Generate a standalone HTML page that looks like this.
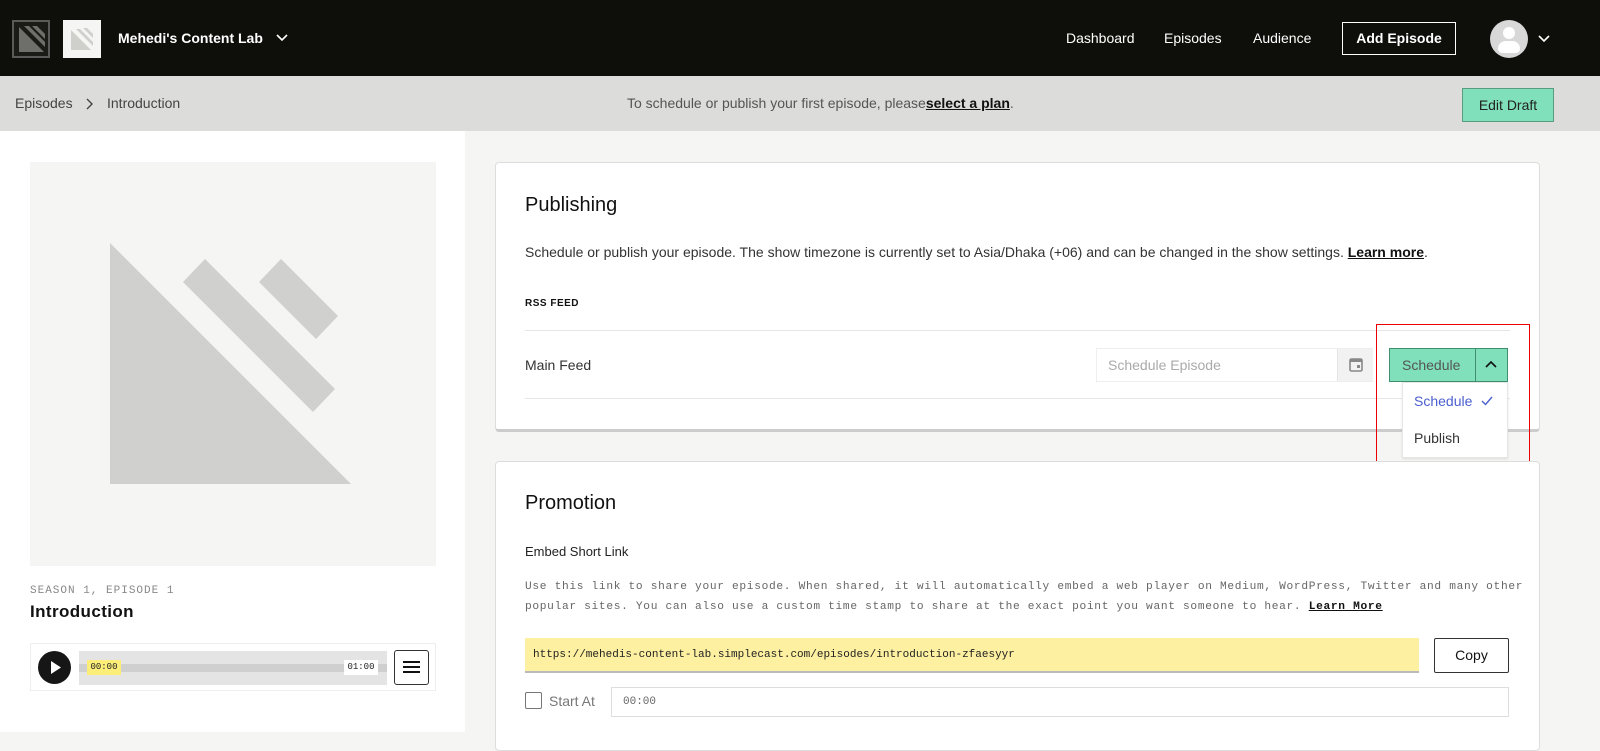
<!DOCTYPE html>
<html><head><meta charset="utf-8"><style>
*{box-sizing:border-box;margin:0;padding:0}
body{width:1600px;height:732px;overflow:hidden;font-family:"Liberation Sans",sans-serif;background:#f5f5f3;position:relative;color:#222}
.abs{position:absolute}
.mono{font-family:"Liberation Mono",monospace}
</style></head><body>
<div class="abs" style="left:0;top:0;width:1600px;height:76px;background:#0e0e0a"></div>
<div class="abs" style="left:12px;top:20px;width:38px;height:38px;border:2px solid #5a5a58;background:#1a1a17">
<svg width="34" height="34" viewBox="0 0 34 34"><polygon points="5,5 5,30 30,30" fill="#6e6e6a"/><polygon points="10,4 15,4 31,20 31,25" fill="#6e6e6a"/><polygon points="18,4 23,4 31,12 31,17" fill="#6e6e6a"/></svg></div>
<div class="abs" style="left:63px;top:20px;width:38px;height:38px;background:#f5f5f3">
<svg width="38" height="38" viewBox="0 0 38 38"><polygon points="8,10 8,30 28,30" fill="#cfcfcc"/><polygon points="13,9 17,9 30,22 30,26" fill="#cfcfcc"/><polygon points="20,8 24,8 30,14 30,18" fill="#cfcfcc"/></svg></div>
<div class="abs" style="left:118px;top:30px;color:#fff;font-size:14px;font-weight:bold">Mehedi's Content Lab</div>
<svg class="abs" style="left:276px;top:33px" width="12" height="10"><path d="M1 2 L6 7 L11 2" stroke="#fff" stroke-width="1.6" fill="none"/></svg>
<div class="abs" style="left:1066px;top:30px;color:#fff;font-size:14px">Dashboard</div>
<div class="abs" style="left:1164px;top:30px;color:#fff;font-size:14px">Episodes</div>
<div class="abs" style="left:1253px;top:30px;color:#fff;font-size:14px">Audience</div>
<div class="abs" style="left:1342px;top:22px;width:114px;height:33px;border:1px solid #fff;color:#fff;font-size:14px;font-weight:bold;text-align:center;line-height:31px">Add Episode</div>
<div class="abs" style="left:1490px;top:20px;width:38px;height:38px;border-radius:50%;background:#d8d8d8;overflow:hidden"><div class="abs" style="left:13px;top:7px;width:12px;height:12px;border-radius:50%;background:#fff"></div><div class="abs" style="left:8px;top:21px;width:22px;height:12px;border-radius:11px 11px 6px 6px;background:#fff"></div></div>
<svg class="abs" style="left:1538px;top:34px" width="12" height="10"><path d="M1 2 L6 7 L11 2" stroke="#fff" stroke-width="1.6" fill="none"/></svg>

<div class="abs" style="left:0;top:76px;width:1600px;height:55px;background:#dcdcdb"></div>
<div class="abs" style="left:15px;top:95px;font-size:14px;color:#444">Episodes</div>
<svg class="abs" style="left:85px;top:98px" width="10" height="12"><path d="M2 1 L7 6 L2 11" stroke="#444" stroke-width="1.4" fill="none"/></svg>
<div class="abs" style="left:107px;top:95px;font-size:14px;color:#444">Introduction</div>
<div class="abs" style="left:627px;top:95px;font-size:14px;color:#555">To schedule or publish your first episode, please<b style="color:#111;text-decoration:underline">select a plan</b>.</div>
<div class="abs" style="left:1462px;top:88px;width:92px;height:34px;background:#7fe0bb;border:1px solid #5a9c82;font-size:14px;color:#222;text-align:center;line-height:32px">Edit Draft</div>

<div class="abs" style="left:0;top:131px;width:465px;height:601px;background:#fff"></div>
<div class="abs" style="left:30px;top:162px;width:406px;height:404px;background:#f5f5f4">
<svg width="406" height="404"><polygon points="80,81 80,322 321,322" fill="#d0d0ce"/><polygon points="153,120 175,97 305,227 283,250" fill="#d0d0ce"/><polygon points="229,120 251,97 308,154 286,177" fill="#d0d0ce"/></svg></div>
<div class="abs mono" style="left:30px;top:585px;font-size:11px;color:#888;letter-spacing:1px">SEASON 1, EPISODE 1</div>
<div class="abs" style="left:30px;top:602px;font-size:17px;font-weight:bold;color:#111;letter-spacing:.4px">Introduction</div>
<div class="abs" style="left:30px;top:643px;width:406px;height:48px;border:1px solid #eee;background:#fff"></div>
<div class="abs" style="left:38px;top:651px;width:33px;height:33px;border-radius:50%;background:#161616"><svg width="33" height="33"><polygon points="13,10 13,23 23,16.5" fill="#fff"/></svg></div>
<div class="abs" style="left:79px;top:651px;width:308px;height:34px;background:#e4e4e4"><div class="abs" style="left:0;top:13px;width:308px;height:8px;background:#cfcfcf"></div></div>
<div class="abs mono" style="left:87px;top:660px;width:34px;height:15px;background:#fdee7a;font-size:9px;text-align:center;line-height:15px">00:00</div>
<div class="abs mono" style="left:344px;top:660px;width:34px;height:15px;background:#fff;font-size:9px;text-align:center;line-height:15px">01:00</div>
<div class="abs" style="left:394px;top:650px;width:35px;height:35px;border:1px solid #333;border-radius:3px"><div class="abs" style="left:8px;top:10px;width:17px;height:2px;background:#111;box-shadow:0 5px #111,0 10px #111"></div></div>

<div class="abs" style="left:495px;top:162px;width:1045px;height:270px;background:#fff;border:1px solid #ddd;border-bottom:3px solid #ccc;border-radius:4px"></div>
<div class="abs" style="left:525px;top:194px;font-size:20px;color:#111">Publishing</div>
<div class="abs" style="left:525px;top:244px;font-size:14px;color:#333">Schedule or publish your episode. The show timezone is currently set to Asia/Dhaka (+06) and can be changed in the show settings. <b style="color:#111;text-decoration:underline">Learn more</b>.</div>
<div class="abs" style="left:525px;top:298px;font-size:10px;font-weight:bold;color:#111;letter-spacing:.5px">RSS FEED</div>
<div class="abs" style="left:525px;top:330px;width:985px;height:1px;background:#e6e6e6"></div>
<div class="abs" style="left:525px;top:398px;width:985px;height:1px;background:#e6e6e6"></div>
<div class="abs" style="left:525px;top:357px;font-size:14px;color:#333">Main Feed</div>
<div class="abs" style="left:1096px;top:348px;width:277px;height:34px;border:1px solid #eee;background:#fff"></div>
<div class="abs" style="left:1108px;top:357px;font-size:14px;color:#aaa">Schedule Episode</div>
<div class="abs" style="left:1337px;top:349px;width:36px;height:32px;background:#f2f2f2;border-left:1px solid #e4e4e4"><svg width="36" height="32"><rect x="12" y="10" width="12" height="12" rx="1.5" fill="none" stroke="#888" stroke-width="1.6"/><rect x="12" y="10" width="12" height="3" fill="#888"/><rect x="19" y="16" width="3" height="3" fill="#888"/></svg></div>
<div class="abs" style="left:1389px;top:348px;width:119px;height:34px;background:#7fe0bb;border:1px solid #3f8f6f"></div>
<div class="abs" style="left:1475px;top:348px;width:1px;height:34px;background:#3f8f6f"></div>
<div class="abs" style="left:1402px;top:357px;font-size:14px;color:#555">Schedule</div>
<svg class="abs" style="left:1485px;top:360px" width="12" height="9"><path d="M1 7 L6 2 L11 7" stroke="#111" stroke-width="1.6" fill="none"/></svg>
<div class="abs" style="left:1402px;top:382px;width:106px;height:76px;background:#fff;border:1px solid #e6e6e6;box-shadow:0 1px 2px rgba(0,0,0,.1)"></div>
<div class="abs" style="left:1414px;top:393px;font-size:14px;color:#4a5fcf">Schedule</div>
<svg class="abs" style="left:1480px;top:395px" width="14" height="12"><path d="M2 6 L5.5 9.5 L12 2" stroke="#4a5fcf" stroke-width="1.4" fill="none"/></svg>
<div class="abs" style="left:1414px;top:430px;font-size:14px;color:#333">Publish</div>
<div class="abs" style="left:1376px;top:324px;width:154px;height:155px;border:1.5px solid #e00"></div>

<div class="abs" style="left:495px;top:461px;width:1045px;height:290px;background:#fff;border:1px solid #ddd;border-radius:4px"></div>
<div class="abs" style="left:525px;top:492px;font-size:20px;color:#111">Promotion</div>
<div class="abs" style="left:525px;top:544px;font-size:13px;color:#222">Embed Short Link</div>
<div class="abs mono" style="left:525px;top:577px;font-size:11.2px;color:#666;line-height:20px;letter-spacing:.68px;width:1010px">Use this link to share your episode. When shared, it will automatically embed a web player on Medium, WordPress, Twitter and many other popular sites. You can also use a custom time stamp to share at the exact point you want someone to hear. <b style="color:#111;text-decoration:underline">Learn More</b></div>
<div class="abs" style="left:525px;top:638px;width:894px;height:35px;background:#fdf0a0;border-bottom:2px solid #bbb"></div>
<div class="abs mono" style="left:533px;top:649px;font-size:11px;color:#222">https://mehedis-content-lab.simplecast.com/episodes/introduction-zfaesyyr</div>
<div class="abs" style="left:1434px;top:638px;width:75px;height:35px;border:1px solid #333;border-radius:2px;font-size:14px;text-align:center;line-height:33px;color:#111">Copy</div>
<div class="abs" style="left:525px;top:692px;width:17px;height:17px;border:1.5px solid #777;border-radius:2px"></div>
<div class="abs" style="left:549px;top:693px;font-size:14px;color:#777">Start At</div>
<div class="abs" style="left:611px;top:687px;width:898px;height:30px;border:1px solid #ddd;background:#fff"></div>
<div class="abs mono" style="left:623px;top:696px;font-size:11px;color:#666">00:00</div>
</body></html>
